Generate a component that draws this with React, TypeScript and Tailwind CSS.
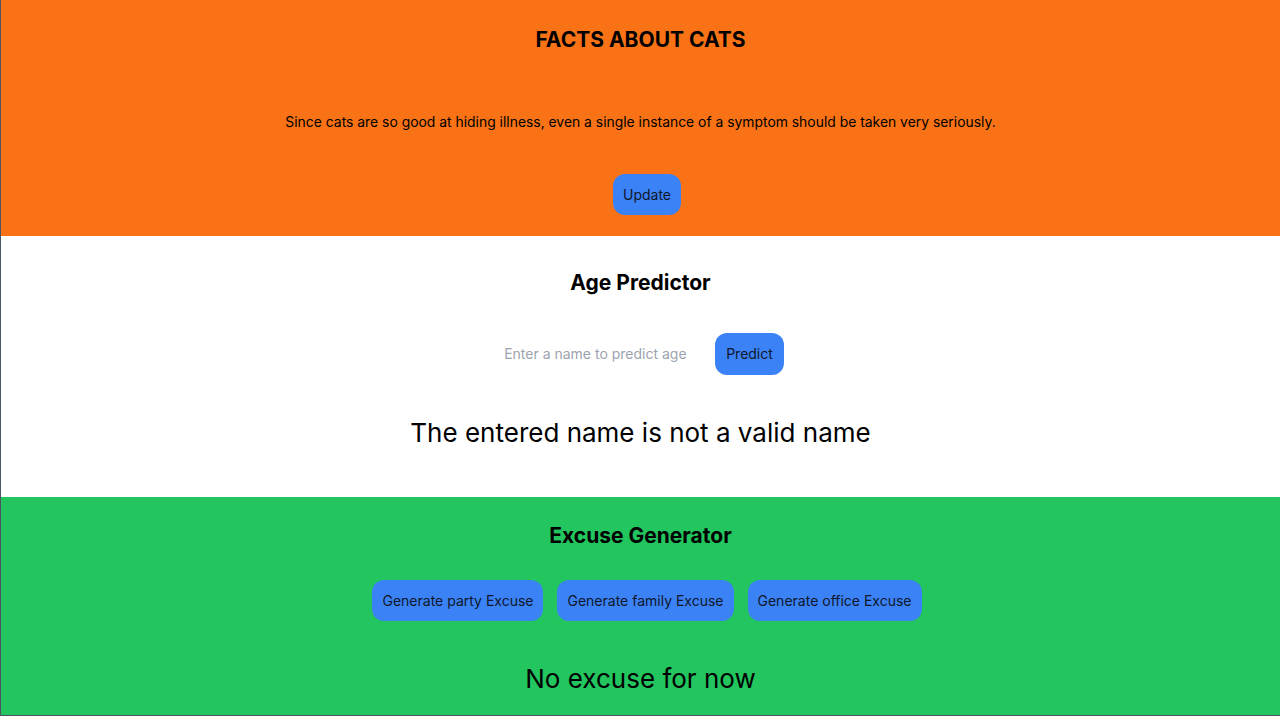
export default function App() {
  return (
    <div className="min-h-[716px] w-full border-l border-b border-[#4b5563] font-['Inter',sans-serif] text-black">
      {/* Cat facts */}
      <section className="flex flex-col items-center bg-[#f97316] pt-[26px] pb-[21px]">
        <h1 className="text-[21px] font-bold leading-7">FACTS ABOUT CATS</h1>
        <p className="mt-[58px] text-[13.9px] leading-5">
          Since cats are so good at hiding illness, even a single instance of a
          symptom should be taken very seriously.
        </p>
        <button className="mt-[42px] ml-[13px] rounded-xl bg-[#3b82f6] px-[10px] py-[10.5px] text-sm leading-5 text-[#0f172a]">
          Update
        </button>
      </section>

      {/* Age predictor */}
      <section className="flex flex-col items-center bg-white pt-[33px] pb-[48px]">
        <h1 className="text-[21px] font-bold leading-7">Age Predictor</h1>
        <div className="mt-[36px] flex items-center gap-[18px]">
          <input
            className="w-[200px] px-[7px] text-sm leading-5 outline-none placeholder:text-[#9ca3af]"
            placeholder="Enter a name to predict age"
          />
          <button className="rounded-xl bg-[#3b82f6] px-[11px] py-[11px] text-sm leading-5 text-[#0f172a]">
            Predict
          </button>
        </div>
        <p className="mt-[42px] text-[26px] leading-8">
          The entered name is not a valid name
        </p>
      </section>

      {/* Excuses */}
      <section className="flex flex-col items-center bg-[#22c55e] pt-[25px] pb-[20px]">
        <h1 className="text-[21px] font-bold leading-7">Excuse Generator</h1>
        <div className="mt-[30px] flex gap-[14px] pl-[13px]">
          <button className="rounded-xl bg-[#3b82f6] px-[10px] py-[10.5px] text-sm leading-5 text-[#0f172a]">
            Generate party Excuse
          </button>
          <button className="rounded-xl bg-[#3b82f6] px-[10px] py-[10.5px] text-sm leading-5 text-[#0f172a]">
            Generate family Excuse
          </button>
          <button className="rounded-xl bg-[#3b82f6] px-[10px] py-[10.5px] text-sm leading-5 text-[#0f172a]">
            Generate office Excuse
          </button>
        </div>
        <p className="mt-[42px] text-[26px] leading-8">No excuse for now</p>
      </section>
    </div>
  );
}
